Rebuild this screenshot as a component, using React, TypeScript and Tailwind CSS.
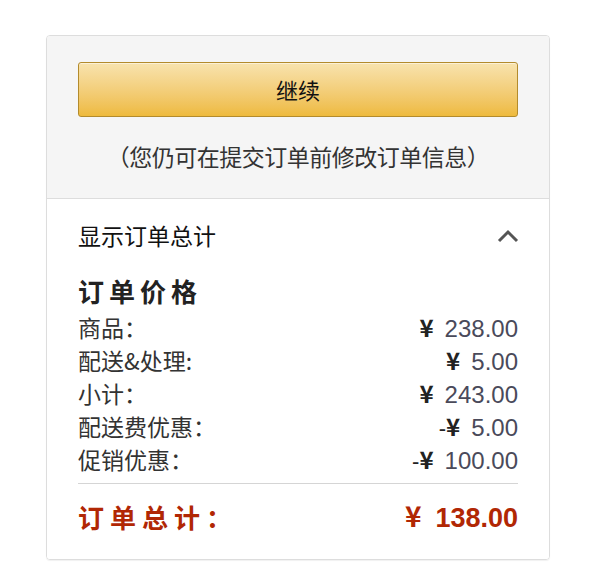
import React from "react";

const cjk = { fontFamily: '"Noto Sans CJK SC", "Liberation Sans", sans-serif' };
const num = { fontFamily: '"Liberation Sans", Arial, sans-serif' };

function Row({ label, sign, value }: { label: string; sign?: string; value: string }) {
  return (
    <div className="flex h-[33px] items-center justify-between text-[23px] leading-none text-[#333]">
      <span>{label}</span>
      <span className="flex items-baseline">
        <span className="text-[#222]">
          {sign ? <span className="text-[22px] font-normal" style={num}>{sign}</span> : null}
          <span className="text-[24px] font-bold">¥</span>
        </span>
        <span className="ml-[11px] text-[24px] text-[#4a4a5a]" style={num}>{value}</span>
      </span>
    </div>
  );
}

export default function App() {
  return (
    <div className="min-h-[580px] w-[600px] bg-white pt-[35px]" style={cjk}>
      <div className="ml-[46px] w-[504px] overflow-hidden rounded-[4px] border border-[#dddddd] shadow-[0_1px_1px_rgba(0,0,0,0.06)]">
        <div className="flex h-[163px] flex-col items-center border-b border-[#dddddd] bg-[#f5f5f5] px-[31px] pt-[26px]">
          <button className="flex h-[55px] w-full items-center justify-center rounded-[3px] border border-[#b38b2c] bg-gradient-to-b from-[#f8e3ad] to-[#eeba3c] text-[22px] text-[#111] shadow-[inset_0_1px_0_rgba(255,255,255,0.5)]">
            继续
          </button>
          <div className="mt-[28px] text-[23px] leading-none tracking-[-0.5px] text-[#333]">（您仍可在提交订单前修改订单信息）</div>
        </div>
        <div className="bg-white px-[31px] pb-[7px]">
          <div className="flex h-[78px] items-center justify-between pb-[5px]">
            <span className="text-[23px] leading-none text-[#111]">显示订单总计</span>
            <svg width="24" height="14" viewBox="0 0 24 14" className="mr-[-2px]">
              <path d="M3 12 L12 3 L21 12" fill="none" stroke="#555" strokeWidth="3" />
            </svg>
          </div>
          <div className="flex h-[34px] items-center pb-[6px] text-[26px] font-bold leading-none tracking-[5px] text-[#222]">订单价格</div>
          <div>
            <Row label="商品：" value="238.00" />
            <Row label="配送&处理:" value="5.00" />
            <Row label="小计：" value="243.00" />
            <Row label="配送费优惠：" sign="-" value="5.00" />
            <Row label="促销优惠：" sign="-" value="100.00" />
          </div>
          <div className="mt-[7px] border-t border-[#d5d5d5]" />
          <div className="flex h-[68px] items-center justify-between pb-[3px] text-[#b12704]">
            <span className="text-[26px] font-bold leading-none tracking-[6px]">订单总计：</span>
            <span className="flex items-baseline font-bold leading-none">
              <span className="text-[28px]">¥</span>
              <span className="ml-[14px] text-[27px]" style={num}>138.00</span>
            </span>
          </div>
        </div>
      </div>
    </div>
  );
}
